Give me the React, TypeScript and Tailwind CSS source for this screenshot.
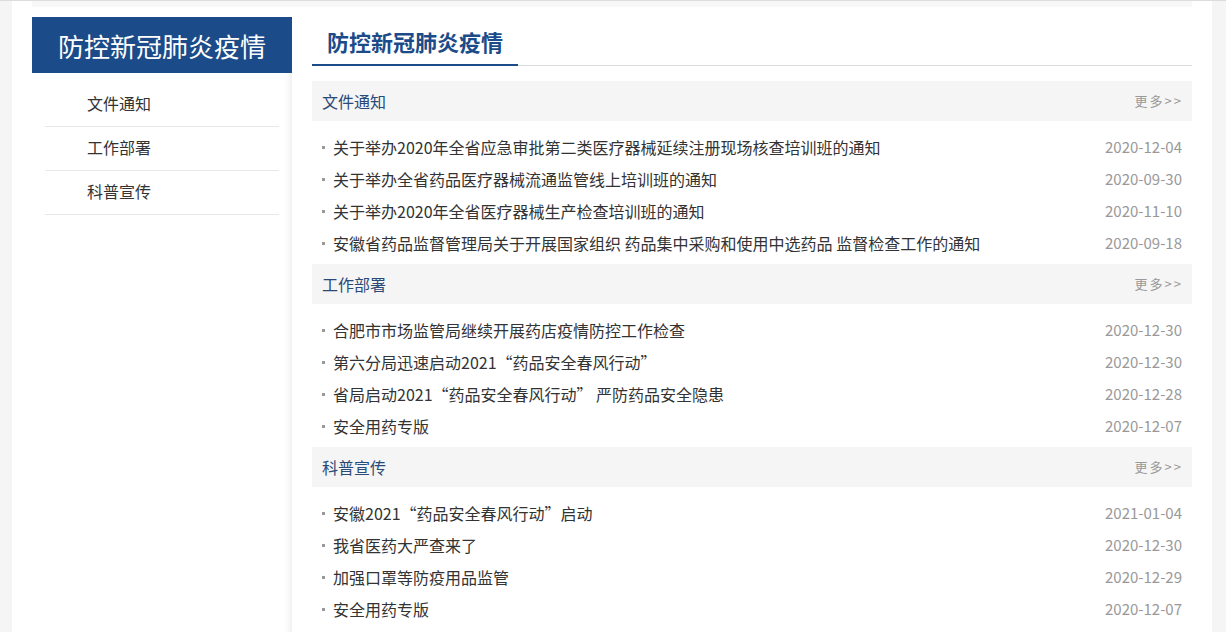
import React from "react";

const sections = [
  {
    title: "文件通知",
    items: [
      ["关于举办2020年全省应急审批第二类医疗器械延续注册现场核查培训班的通知", "2020-12-04"],
      ["关于举办全省药品医疗器械流通监管线上培训班的通知", "2020-09-30"],
      ["关于举办2020年全省医疗器械生产检查培训班的通知", "2020-11-10"],
      ["安徽省药品监督管理局关于开展国家组织 药品集中采购和使用中选药品 监督检查工作的通知", "2020-09-18"],
    ],
  },
  {
    title: "工作部署",
    items: [
      ["合肥市市场监管局继续开展药店疫情防控工作检查", "2020-12-30"],
      ["第六分局迅速启动2021“药品安全春风行动”", "2020-12-30"],
      ["省局启动2021“药品安全春风行动” 严防药品安全隐患", "2020-12-28"],
      ["安全用药专版", "2020-12-07"],
    ],
  },
  {
    title: "科普宣传",
    items: [
      ["安徽2021“药品安全春风行动”启动", "2021-01-04"],
      ["我省医药大严查来了", "2020-12-30"],
      ["加强口罩等防疫用品监管", "2020-12-29"],
      ["安全用药专版", "2020-12-07"],
    ],
  },
];

export default function App() {
  return (
    <div
      className="min-h-[632px] bg-[#f5f5f5] border-t border-[#dcdcdc]"
      style={{ fontFamily: '"Microsoft YaHei", "Noto Sans CJK SC", "Noto Sans", sans-serif' }}
    >
      <div className="mx-[12px] w-[1200px] min-h-[631px] bg-white px-[20px]">
        <div className="h-[6px] bg-[#f7f7f7]" />
        <div className="flex gap-[20px] pt-[10px]">
          <aside className="w-[260px] shrink-0 min-h-[615px] shadow-[inset_-7px_0_7px_-5px_rgba(0,0,0,0.08)]">
            <div className="h-[56px] bg-[#1b4b88] flex items-center justify-center text-white text-[26px]">
              防控新冠肺炎疫情
            </div>
            <ul className="px-[13px] pt-[10px]">
              {["文件通知", "工作部署", "科普宣传"].map((t) => (
                <li
                  key={t}
                  className="h-[44px] border-b border-[#e8e8e8] flex items-center pl-[42px] pb-[4px] text-[16px] text-[#333]"
                >
                  {t}
                </li>
              ))}
            </ul>
          </aside>
          <main className="w-[880px]">
            <div className="relative h-[49px] border-b border-[#ddd] flex items-center pl-[15px]">
              <span className="text-[22px] font-bold text-[#1b4b88] pt-[1px]">防控新冠肺炎疫情</span>
              <div className="absolute left-0 bottom-[-1px] w-[206px] h-[2px] bg-[#1b4b88]" />
            </div>
            <div className="pt-[15px]">
              {sections.map((s) => (
                <section key={s.title} className="pb-[5px]">
                  <div className="h-[40px] bg-[#f5f5f5] flex items-center justify-between pl-[10px] pr-[9px]">
                    <span className="text-[16px] text-[#2a4a78]">{s.title}</span>
                    <span className="text-[13px] text-[#999] tracking-[2px]">更多&gt;&gt;</span>
                  </div>
                  <ul className="pt-[10px] px-[10px]">
                    {s.items.map(([t, d]) => (
                      <li key={t + d} className="h-[32px] flex items-center justify-between text-[16px]">
                        <span className="flex items-center text-[#333]">
                          <span className="w-[3px] h-[3px] bg-[#999] mr-[8px]" />
                          {t}
                        </span>
                        <span className="text-[#999] text-[15px]">{d}</span>
                      </li>
                    ))}
                  </ul>
                </section>
              ))}
            </div>
          </main>
        </div>
      </div>
    </div>
  );
}
